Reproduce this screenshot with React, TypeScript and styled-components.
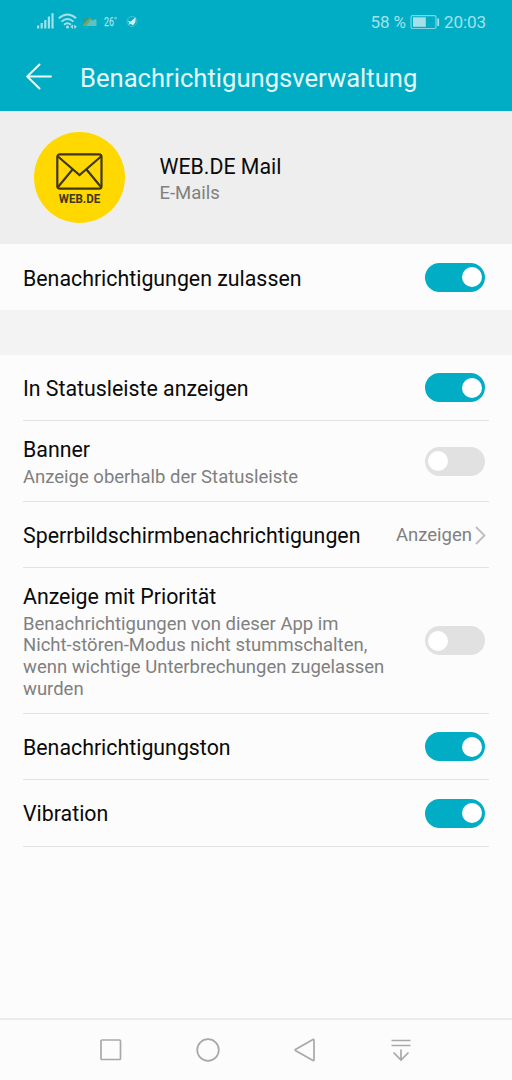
import React from "react";
import styled, { createGlobalStyle } from "styled-components";

const GlobalStyle = createGlobalStyle`
  * { box-sizing: border-box; }
  body {
    margin: 0;
    background: #fcfcfc;
    font-family: Roboto, "Liberation Sans", sans-serif;
  }
`;

const Screen = styled.div`
  width: 512px;
  height: 1080px;
  display: flex;
  flex-direction: column;
  background: #fcfcfc;
  overflow: hidden;
`;

const Top = styled.header`
  height: 111px;
  flex: none;
  background: #00adc5;
`;

const StatusBar = styled.div`
  height: 44px;
  padding: 0 26px 0 36px;
  display: flex;
  justify-content: space-between;
  align-items: center;
  color: #a3e1ea;
  font-size: 17.07px;
  line-height: 20px;
`;

const StatusRight = styled.div`
  display: flex;
  align-items: center;
  gap: 4px;
  letter-spacing: -0.1px;
`;

const TitleBar = styled.div`
  height: 67px;
  padding-left: 26px;
  display: flex;
  align-items: center;
  gap: 28px;
`;

const BackArrow = styled.svg`
  margin-top: -1px;
`;

const Title = styled.h1`
  margin: 0;
  font-size: 25.6px;
  line-height: 30px;
  font-weight: 400;
  color: #e6f9fb;
`;

const AppPanel = styled.section`
  height: 133px;
  flex: none;
  padding-left: 34px;
  display: flex;
  align-items: center;
  gap: 34.5px;
  background: #eeeeee;
`;

const Logo = styled.div`
  width: 91px;
  height: 91px;
  border-radius: 50%;
  background: #ffd800;
  display: flex;
  flex-direction: column;
  align-items: center;
  padding-top: 21px;
`;

const LogoText = styled.span`
  margin-top: 2px;
  font: 700 12.6px/14px Roboto, "Liberation Sans", sans-serif;
  color: #403618;
  transform: scaleX(0.92);
`;

const Row = styled.div<{ $height: number }>`
  height: ${(p) => p.$height}px;
  flex: none;
  margin-left: 23px;
  margin-right: 23px;
  padding-right: 4px;
  display: flex;
  align-items: center;
  justify-content: space-between;
  border-bottom: 1px solid #e2e2e2;
`;

const AllowRow = styled(Row)`
  border-bottom: 0;
`;

const Labels = styled.div<{ $double?: boolean }>`
  display: flex;
  flex-direction: column;
  gap: 5px;
  max-width: 366px;
  padding-top: ${(p) => (p.$double ? 3 : 1)}px;
`;

const AppLabels = styled(Labels)`
  gap: 4px;
  padding-top: 4px;
`;

const Label = styled.div`
  font-size: 21.33px;
  line-height: 25px;
  color: #0a0a0a;
  white-space: nowrap;
`;

const Hint = styled.div`
  font-size: 18.49px;
  line-height: 21.67px;
  color: #808080;
`;

const Gap = styled.div`
  height: 45px;
  flex: none;
  background: #f3f3f3;
`;

const Toggle = styled.span<{ $on: boolean }>`
  width: 60px;
  height: 29px;
  flex: none;
  padding: 0 3px;
  border-radius: 15px;
  display: flex;
  align-items: center;
  justify-content: ${(p) => (p.$on ? "flex-end" : "flex-start")};
  background: ${(p) => (p.$on ? "#00adc5" : "#e1e1e1")};
`;

const Knob = styled.span`
  width: 20px;
  height: 20px;
  border-radius: 50%;
  background: #ffffff;
`;

const Value = styled.div`
  display: flex;
  align-items: center;
  gap: 3px;
  margin-right: -1px;
  padding-top: 1px;
  font-size: 18.49px;
  line-height: 22px;
  color: #808080;
`;

const NavBar = styled.nav`
  height: 62px;
  flex: none;
  margin-top: auto;
  padding: 0 62px 1px 63px;
  display: grid;
  grid-template-columns: repeat(4, 96.7px);
  align-items: center;
  justify-items: center;
  border-top: 2px solid #ebebeb;
`;

const StatusIcons = () => (
  <svg width="110" height="24" viewBox="36 10 110 24" fill="none">
    <g fill="#a3e1ea">
      <rect x="37" y="25.5" width="2.2" height="3" />
      <rect x="40.6" y="23" width="2.2" height="5.5" />
      <rect x="44.2" y="20" width="2.2" height="8.5" />
      <rect x="47.8" y="16.5" width="2.2" height="12" />
      <rect x="51.4" y="13.2" width="2.2" height="15.3" />
    </g>
    <g stroke="#a3e1ea" strokeWidth="1.9">
      <path d="M58.8 18.2Q67.5 10.6 76.2 18.2" />
      <path d="M61.5 21.6Q67.5 16.2 73.5 21.6" />
      <path d="M64 24.8Q67.5 21.8 71 24.8" />
    </g>
    <circle cx="67.5" cy="27" r="1.6" fill="#a3e1ea" />
    <path d="M73 24.4v4.6l-2.7-2.3zM74.2 24.4v4.6l2.7-2.3z" fill="#a3e1ea" />
    <path d="M83 18h8l-8 8z" fill="#2b9f8e" />
    <path d="M85 26l6-7 2 2 1-1.5h2.5v6.5z" fill="#5bc3c1" />
    <path d="M83 26v-1.5l7-7 1.5 1.5-5.5 7z" fill="#78a560" />
    <text x="104" y="26" fill="#a3e1ea" stroke="#a3e1ea" strokeWidth="0.25" fontFamily="Roboto, sans-serif" fontSize="12.5" textLength="10" lengthAdjust="spacingAndGlyphs">26</text>
    <circle cx="115.6" cy="18.2" r="0.9" stroke="#a3e1ea" strokeWidth="0.8" />
    <circle cx="132" cy="21.5" r="5" stroke="#3fc2d2" strokeWidth="1" />
    <path d="M127.3 20.4l3.4 1.2 5-4.4-.4 5.2-2.4 3-1.8-1.4-2.8.4 1-1.8z" fill="#d2f3f5" />
  </svg>
);

const Battery = () => (
  <svg width="30" height="16" viewBox="0 0 30 16" fill="none">
    <rect x="1" y="1.7" width="25" height="12.8" rx="1.5" stroke="#7fd6e1" strokeWidth="1.2" />
    <rect x="3" y="3.3" width="12.8" height="9.5" fill="#a3e1ea" />
    <path d="M28.2 4.5v7.5" stroke="#a3e1ea" strokeWidth="1.8" />
  </svg>
);

const Envelope = () => (
  <svg width="47" height="37" viewBox="0 0 47 37" fill="none" stroke="#403618" strokeWidth="2.2" strokeLinejoin="round">
    <rect x="1.3" y="1.3" width="44.2" height="34.4" rx="2.5" />
    <path d="M2 3.5L23.5 22 45 3.5M2 34L16.5 16.5M45 34L30.5 16.5" strokeLinejoin="miter" />
  </svg>
);

const Setting = ({ label, hint, on, height }: { label: string; hint?: string; on: boolean; height: number }) => (
  <Row $height={height}>
    <Labels $double={Boolean(hint)}>
      <Label>{label}</Label>
      {hint && <Hint>{hint}</Hint>}
    </Labels>
    <Toggle $on={on}>
      <Knob />
    </Toggle>
  </Row>
);

export default function App() {
  return (
    <Screen>
      <GlobalStyle />
      <Top>
        <StatusBar>
          <StatusIcons />
          <StatusRight>
            <span>58 %</span>
            <Battery />
            <span>20:03</span>
          </StatusRight>
        </StatusBar>
        <TitleBar>
          <BackArrow width="26" height="28" viewBox="0 0 26 28" fill="none" stroke="#e6f9fb" strokeWidth="2" strokeLinecap="round" strokeLinejoin="round">
            <path d="M13.5 1.5L1.2 13.5 13.5 25.5M1.2 13.5H25" />
          </BackArrow>
          <Title>Benachrichtigungsverwaltung</Title>
        </TitleBar>
      </Top>
      <AppPanel>
        <Logo>
          <Envelope />
          <LogoText>WEB.DE</LogoText>
        </Logo>
        <AppLabels>
          <Label>WEB.DE Mail</Label>
          <Hint>E-Mails</Hint>
        </AppLabels>
      </AppPanel>
      <AllowRow $height={66}>
        <Labels $double>
          <Label>Benachrichtigungen zulassen</Label>
        </Labels>
        <Toggle $on>
          <Knob />
        </Toggle>
      </AllowRow>
      <Gap />
      <Setting label="In Statusleiste anzeigen" on height={66} />
      <Setting label="Banner" hint="Anzeige oberhalb der Statusleiste" on={false} height={81} />
      <Row $height={66}>
        <Labels>
          <Label>Sperrbildschirmbenachrichtigungen</Label>
        </Labels>
        <Value>
          Anzeigen
          <svg width="11" height="19" viewBox="0 0 11 19" fill="none" stroke="#bdbdbd" strokeWidth="1.8">
            <path d="M1 1L9.5 9.5 1 18" />
          </svg>
        </Value>
      </Row>
      <Setting
        label="Anzeige mit Priorität"
        hint="Benachrichtigungen von dieser App im Nicht-stören-Modus nicht stummschalten, wenn wichtige Unterbrechungen zugelassen wurden"
        on={false}
        height={146}
      />
      <Setting label="Benachrichtigungston" on height={66} />
      <Setting label="Vibration" on height={67} />
      <NavBar>
        <svg width="24" height="24" viewBox="0 0 24 24" fill="none" stroke="#a8a8a8" strokeWidth="1.7">
          <rect x="2" y="2" width="19.5" height="19.5" rx="1" />
        </svg>
        <svg width="24" height="24" viewBox="0 0 24 24" fill="none" stroke="#a8a8a8" strokeWidth="1.7">
          <circle cx="12" cy="12" r="10.8" />
        </svg>
        <svg width="24" height="24" viewBox="0 0 24 24" fill="none" stroke="#a8a8a8" strokeWidth="1.7" strokeLinejoin="round">
          <path d="M20 1.5Q21 1 21 2.5V21.5Q21 23 20 22.5L2.8 12.8Q1.5 12 2.8 11.2z" />
        </svg>
        <svg width="24" height="24" viewBox="0 0 24 24" fill="none" stroke="#a8a8a8" strokeWidth="1.7">
          <path d="M2.5 2.5h19M2.5 7.5h19M12 11.5v10M4.5 14.5L12 22l7.5-7.5" />
        </svg>
      </NavBar>
    </Screen>
  );
}
